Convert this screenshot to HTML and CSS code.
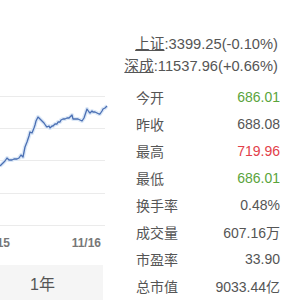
FILE: index.html
```html
<!DOCTYPE html>
<html>
<head>
<meta charset="utf-8">
<link rel="stylesheet" href="styles.css">
</head>
<body>
<div class="page">
  <div class="chart-col">
    <svg class="chart" width="108" height="140" viewBox="0 0 108 140">
      <g stroke="#ebebeb" stroke-width="1">
        <line x1="0" y1="6.5" x2="105" y2="6.5"/>
        <line x1="0" y1="38.5" x2="105" y2="38.5"/>
        <line x1="0" y1="70.5" x2="105" y2="70.5"/>
        <line x1="0" y1="103.5" x2="105" y2="103.5"/>
        <line x1="0" y1="135.5" x2="105" y2="135.5"/>
      </g>
      <polyline fill="none" stroke="#dce8f7" stroke-width="4" stroke-linejoin="round"
        points="0,76 3,73 5,71 7,68 9,70 12,70 14,69 17,69 19,68 21,65 22,66 23,67 24,62 25,57 27,52 29,46 30,42 32,43 34,38 35,35 36,31 38,27 40,29 42,31 44,33 46,36 47,37 49,36 50,38 52,36 53,36 55,34 57,34 58,32 60,32 61,30 63,29 65,29 67,28 69,28 70,27 71,26 72,25 73,29 75,29 78,29 80,30 82,31 84,28 85,25 86,22 87,19 89,22 90,23 92,21 93,22 95,22 97,23 99,24 100,24 102,21 103,19 105,18 107,16"/>
      <polyline fill="none" stroke="#4a6fb3" stroke-width="1.3" stroke-linejoin="round"
        points="0,76 3,73 5,71 7,68 9,70 12,70 14,69 17,69 19,68 21,65 22,66 23,67 24,62 25,57 27,52 29,46 30,42 32,43 34,38 35,35 36,31 38,27 40,29 42,31 44,33 46,36 47,37 49,36 50,38 52,36 53,36 55,34 57,34 58,32 60,32 61,30 63,29 65,29 67,28 69,28 70,27 71,26 72,25 73,29 75,29 78,29 80,30 82,31 84,28 85,25 86,22 87,19 89,22 90,23 92,21 93,22 95,22 97,23 99,24 100,24 102,21 103,19 105,18 107,16"/>
    </svg>
    <div class="dates">
      <span class="date first">05/15</span>
      <span class="date">11/16</span>
    </div>
    <div class="tab">1年</div>
  </div>
  <div class="info-col">
    <div class="index-line"><a class="idx">上证</a>:3399.25(-0.10%)</div>
    <div class="index-line"><a class="idx">深成</a>:11537.96(+0.66%)</div>
    <div class="table">
      <div class="row"><span class="label">今开</span><span class="val green">686.01</span></div>
      <div class="row"><span class="label">昨收</span><span class="val">688.08</span></div>
      <div class="row"><span class="label">最高</span><span class="val red">719.96</span></div>
      <div class="row"><span class="label">最低</span><span class="val green">686.01</span></div>
      <div class="row"><span class="label">换手率</span><span class="val">0.48%</span></div>
      <div class="row"><span class="label">成交量</span><span class="val">607.16万</span></div>
      <div class="row"><span class="label">市盈率</span><span class="val">33.90</span></div>
      <div class="row"><span class="label">总市值</span><span class="val">9033.44亿</span></div>
    </div>
  </div>
</div>
</body>
</html>
```
FILE: styles.css
```css
html, body {
  margin: 0;
  padding: 0;
  background: #fff;
}
body {
  font-family: "Liberation Sans", Arial, "Noto Sans CJK SC", sans-serif;
  color: #555;
  width: 300px;
  height: 300px;
  overflow: hidden;
}
.page {
  display: flex;
  height: 300px;
}
.chart-col {
  width: 108px;
  flex: none;
  overflow: hidden;
  padding-top: 90px;
  display: flex;
  flex-direction: column;
}
.chart {
  display: block;
}
.dates {
  display: flex;
  justify-content: space-between;
  height: 26px;
  align-items: center;
  width: 101px;
  font-size: 12px;
  font-weight: bold;
  color: #777;
}
.date.first {
  margin-left: -20px;
}
.tab {
  margin-top: 9px;
  height: 35px;
  width: 103px;
  padding-right: 18px;
  box-sizing: border-box;
  background: #f5f5f5;
  font-size: 16px;
  color: #555;
  display: flex;
  align-items: center;
  justify-content: center;
}
.info-col {
  flex: 1;
  padding: 33px 22px 0 16px;
  display: flex;
  flex-direction: column;
  align-items: stretch;
}
.index-line {
  font-size: 14.7px;
  line-height: 22px;
  text-align: right;
  color: #555;
  white-space: nowrap;
}
.idx {
  text-decoration: underline;
  color: #555;
}
.table {
  margin-top: 6px;
  margin-right: -2px;
  padding-left: 12px;
}
.row {
  display: flex;
  justify-content: space-between;
  align-items: center;
  height: 27px;
  font-size: 14px;
}
.label {
  color: #555;
}
.val {
  color: #555;
}
.green {
  color: #5aa43c;
}
.red {
  color: #e2404a;
}
```
